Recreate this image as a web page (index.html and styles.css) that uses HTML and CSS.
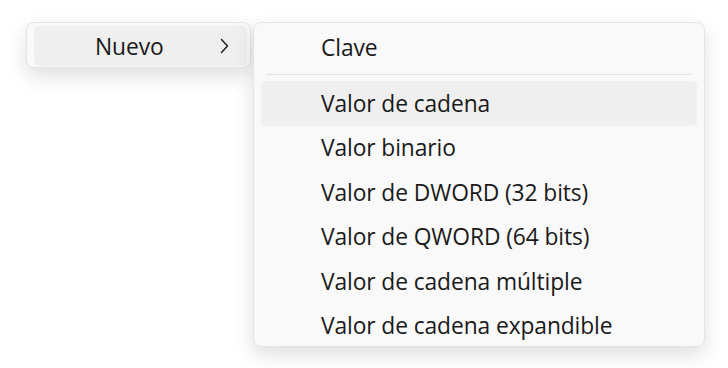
FILE: index.html
```html
<!DOCTYPE html>
<html lang="es">
<head>
<meta charset="utf-8">
<link rel="stylesheet" href="styles.css">
</head>
<body>
<div class="stage">
  <div class="menu parent">
    <div class="item active">
      <span class="label">Nuevo</span>
      <svg class="chev" width="9" height="16" viewBox="0 0 9 16"><path d="M1.5 1.5 L7.5 8 L1.5 14.5" fill="none" stroke="#1a1a1a" stroke-width="1.4" stroke-linecap="round" stroke-linejoin="round"/></svg>
    </div>
  </div>
  <div class="menu sub">
    <div class="item">Clave</div>
    <div class="sep"></div>
    <div class="item active">Valor de cadena</div>
    <div class="item">Valor binario</div>
    <div class="item">Valor de DWORD (32 bits)</div>
    <div class="item">Valor de QWORD (64 bits)</div>
    <div class="item">Valor de cadena múltiple</div>
    <div class="item">Valor de cadena expandible</div>
  </div>
</div>
</body>
</html>
```
FILE: styles.css
```css
html, body {
  margin: 0;
  padding: 0;
  background: #ffffff;
}
body {
  font-family: "Open Sans", "Noto Sans", sans-serif;
  color: #1a1a1a;
  width: 728px;
  height: 368px;
  overflow: hidden;
}
.stage {
  display: flex;
  align-items: flex-start;
  gap: 2px;
  padding: 22px 0 0 26px;
}
.menu {
  background: #f9f9f9;
  border: 1px solid #e4e4e4;
  border-radius: 8px;
  box-shadow: 0 8px 20px rgba(0, 0, 0, 0.13);
  box-sizing: border-box;
}
.parent {
  width: 225px;
  height: 46px;
  padding: 3px 3px 1px 7px;
}
.parent .item {
  height: 40px;
  display: flex;
  align-items: center;
  padding: 0 0 0 61px;
  border-radius: 5px;
}
.parent .label {
  flex: 1;
}
.chev {
  margin-right: 18px;
}
.sub {
  width: 452px;
  height: 325px;
  padding: 2px 7px;
}
.sub .item {
  height: 44.4px;
  display: flex;
  align-items: center;
  padding-left: 60px;
  border-radius: 5px;
}
.item {
  font-size: 22.8px;
  letter-spacing: -0.1px;
}
.item.active {
  background: #efefef;
}
.sep {
  height: 1px;
  background: #e2e2e2;
  margin: 5px 5px 6px 5px;
}
```
